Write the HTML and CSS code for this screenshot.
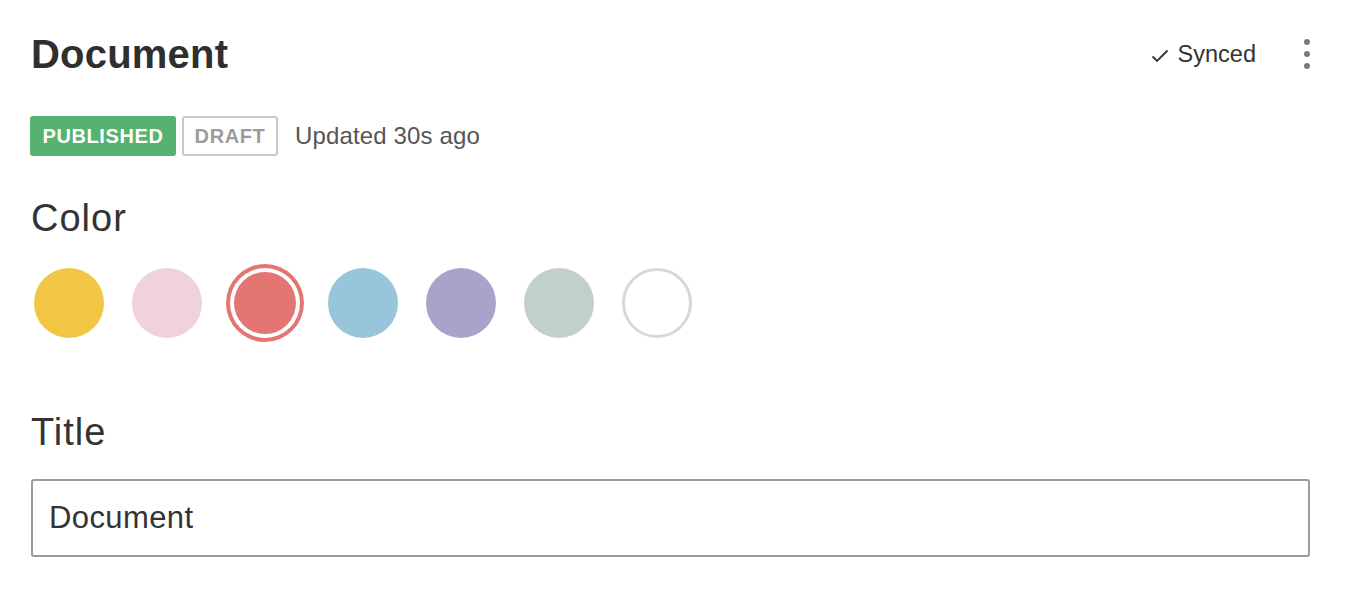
FILE: index.html
```html
<!DOCTYPE html>
<html>
<head>
<meta charset="utf-8">
<link rel="stylesheet" href="styles.css">
</head>
<body>
<div class="panel">
  <header class="header">
    <h1 class="title">Document</h1>
    <div class="actions">
      <span class="sync">
        <svg class="check" width="18" height="14" viewBox="0 0 18 14"><path d="M1.5 7.5 L6 12 L16.5 1.5" fill="none" stroke="#333" stroke-width="1.8"/></svg>
        Synced
      </span>
      <span class="more"><i></i><i></i><i></i></span>
    </div>
  </header>
  <div class="status">
    <span class="badge badge-published">PUBLISHED</span>
    <span class="badge badge-draft">DRAFT</span>
    <span class="updated">Updated 30s ago</span>
  </div>
  <div class="label label-color">Color</div>
  <div class="swatches">
    <span class="swatch yellow"></span>
    <span class="swatch pink"></span>
    <span class="swatch red selected"></span>
    <span class="swatch blue"></span>
    <span class="swatch purple"></span>
    <span class="swatch sage"></span>
    <span class="swatch none"></span>
  </div>
  <div class="label label-title">Title</div>
  <div class="input">Document</div>
</div>
</body>
</html>
```
FILE: styles.css
```css
* { box-sizing: border-box; }
html, body { margin: 0; padding: 0; background: #fff; }
body {
  font-family: "Liberation Sans", Arial, sans-serif;
  color: #333;
}
.panel {
  padding: 30px 50px 0 31px;
}
.header {
  display: flex;
  align-items: center;
  justify-content: space-between;
  height: 48px;
}
.title {
  margin: 0;
  font-size: 40px;
  font-weight: 700;
  line-height: 48px;
  color: #2f2f2f;
  letter-spacing: 0.2px;
}
.actions {
  display: flex;
  align-items: center;
  gap: 48px;
}
.sync {
  display: flex;
  align-items: center;
  gap: 9px;
  font-size: 23.5px;
  color: #333;
}
.check { margin-top: 3px; }
.more {
  display: flex;
  flex-direction: column;
  gap: 6px;
}
.more i {
  display: block;
  width: 6px;
  height: 6px;
  border-radius: 50%;
  background: #7a7a7a;
}
.status {
  display: flex;
  align-items: center;
  margin-top: 38px;
  margin-left: -1px;
  height: 40px;
}
.badge {
  display: inline-flex;
  align-items: center;
  justify-content: center;
  height: 40px;
  border-radius: 3px;
  font-size: 20px;
  font-weight: 700;
  letter-spacing: 0.6px;
}
.badge-published {
  width: 146px;
  background: #56b36f;
  color: #fff;
}
.badge-draft {
  width: 96px;
  margin-left: 6px;
  border: 2px solid #c8c8c8;
  color: #9b9b9b;
}
.updated {
  margin-left: 17px;
  font-size: 24px;
  color: #555;
  letter-spacing: 0.15px;
}
.label {
  font-size: 38px;
  line-height: 48px;
  color: #333;
  letter-spacing: 1px;
}
.label-color { margin-top: 38px; }
.label-title { margin-top: 66px; }
.swatches {
  display: flex;
  align-items: center;
  gap: 28px;
  height: 78px;
  margin-top: 22px;
  padding-left: 3px;
}
.swatch {
  display: block;
  width: 70px;
  height: 70px;
  border-radius: 50%;
  flex: none;
}
.yellow { background: #f1c644; }
.pink { background: #f0d1dc; }
.red { background: #e37573; }
.blue { background: #97c5d9; }
.purple { background: #aaa2c8; }
.sage { background: #c1cfcd; }
.none { border: 3px solid #d8d8d8; background: #fff; }
.selected {
  box-shadow: inset 0 0 0 4px #fff, 0 0 0 4px #e37573;
}
.input {
  margin-top: 23px;
  height: 78px;
  border: 2px solid #9b9b9b;
  border-radius: 3px;
  padding: 0 16px;
  display: flex;
  align-items: center;
  font-size: 31px;
  letter-spacing: 0.4px;
  color: #333;
}
```
